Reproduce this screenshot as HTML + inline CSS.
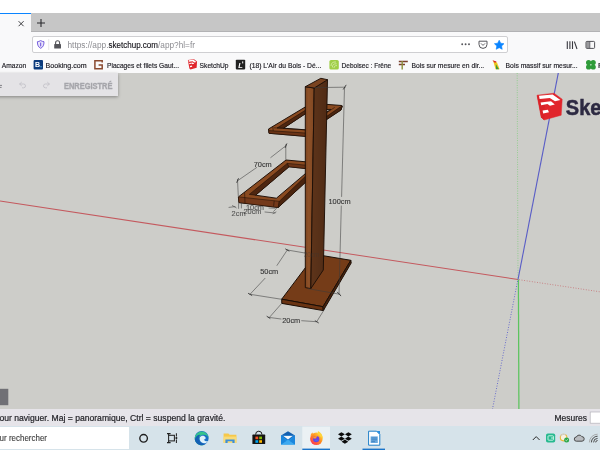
<!DOCTYPE html>
<html>
<head>
<meta charset="utf-8">
<title>SketchUp</title>
<style>
html,body{margin:0;padding:0;}
body{width:600px;height:450px;overflow:hidden;position:relative;background:#ffffff;font-family:"Liberation Sans",sans-serif;}
.abs{position:absolute;}
#tabbar{left:0;top:13px;width:600px;height:19.4px;background:#c6c6c6;border-bottom:0.8px solid #b2b2b4;box-sizing:border-box;}
#tab{left:0;top:13px;width:31.4px;height:19.5px;background:#f9f9fa;border-top:1.5px solid #0a84ff;box-sizing:border-box;}
#navbar{left:0;top:32px;width:600px;height:23px;background:#f9f9fa;}
#urlbar{left:32px;top:36px;width:476px;height:17px;background:#ffffff;border:1px solid #cfcfd2;border-radius:2px;box-sizing:border-box;}
#bmbar{left:0;top:55px;width:600px;height:18px;background:#f9f9fa;}
#canvas{left:0;top:73px;width:600px;height:336px;background:#cdcdc9;overflow:hidden;}
#panel{left:-4px;top:73px;width:122px;height:23px;background:#e4e3e6;box-shadow:0 1px 3px rgba(0,0,0,0.35);}
#status{left:0;top:409px;width:600px;height:17px;background:#e6e4e9;}
#taskbar{left:0;top:426px;width:600px;height:24px;background:#d6e3ea;}
#search{left:0;top:427.4px;width:129.2px;height:21.4px;background:#ffffff;}
</style>
</head>
<body>
<div class="abs" id="tabbar"></div>
<div class="abs" id="tab"></div>
<div class="abs" id="navbar"></div>
<div class="abs" id="urlbar"></div>
<div class="abs" id="bmbar"></div>
<div class="abs" id="canvas"></div>
<svg class="abs" id="scene" style="left:0;top:73px;will-change:transform" width="600" height="336" viewBox="0 73 600 336">
<!-- axes -->
<line x1="0" y1="201" x2="518" y2="279.5" stroke="#c4595e" stroke-width="1.15"/>
<line x1="519" y1="279.7" x2="600" y2="291.8" stroke="#c66a6e" stroke-width="1" stroke-dasharray="0.9 1.7" opacity="0.8"/>
<line x1="517.2" y1="73" x2="518" y2="278.6" stroke="#7fcf7c" stroke-width="0.95" stroke-dasharray="0.9 1.5" opacity="0.85"/>
<line x1="518.4" y1="279.5" x2="518.9" y2="409" stroke="#5cc45e" stroke-width="1.25"/>
<line x1="558.3" y1="73" x2="518" y2="279.5" stroke="#595dc6" stroke-width="1.15"/>
<line x1="517.6" y1="281" x2="492.5" y2="409" stroke="#5c60cc" stroke-width="1" stroke-dasharray="0.9 1.7" opacity="0.95"/>

<!-- base plate -->
<g stroke="#1a0d05" stroke-width="1" stroke-linejoin="round">
<polygon points="281.7,299.2 323,306.7 350.8,260.3 315.4,254.4" fill="#753c18"/>
<polygon points="281.7,299.2 323,306.7 323.3,310.6 281.8,303.4" fill="#6a3413"/>
<polygon points="323,306.7 350.8,260.3 351.2,263 323.3,310.6" fill="#4a230c"/>
</g>

<!-- upper frame -->
<g stroke="#1a0d05" stroke-width="0.95" stroke-linejoin="round">
<!-- left part silhouette -->
<path fill-rule="evenodd" fill="#8a4a20" d="M268.5,129 L311.4,103.3 L312,114 L308,136.6 L269,133.3 Z M283.5,128.2 L308,112 L308,130 Z"/>
<polygon points="277,128 308,108.6 308,112 283.5,128.2" fill="#4e2610" stroke-width="0.55"/>
<polygon points="268.6,130.6 308,133.2 308,136.6 269,133.3" fill="#6b3416" stroke-width="0.55"/>
<line x1="274" y1="127.8" x2="308" y2="130" stroke-width="0.5"/>
<line x1="272.8" y1="126.6" x2="273.2" y2="130.8" stroke-width="0.55"/>
<!-- right part -->
<path fill-rule="evenodd" fill="#8a4a20" d="M322,104 L341.8,105.5 L342.3,106 L341,110 L322,122.6 Z M322,109.6 L330.8,109.4 L322,115.2 Z"/>
<polygon points="342.3,106 341,110 322,122.6 322,119.6 339,107.8" fill="#4a240e" stroke-width="0.55"/>
<line x1="334.7" y1="107.4" x2="322" y2="115.8" stroke-width="0.55"/>
</g>

<!-- lower frame -->
<g stroke="#1a0d05" stroke-width="0.95" stroke-linejoin="round">
<path fill-rule="evenodd" fill="#8a4a20" d="M238.4,196.9 L286,160 L308,162 L308,180 L278.2,207.5 L238.9,202.6 Z M255.6,195.2 L289,166.8 L308,168.8 L308,171.4 L276.4,198.2 Z"/>
<polygon points="249.3,194.4 287.3,163.4 289,166.8 255.6,195.2" fill="#4e2610" stroke-width="0.55"/>
<polygon points="287.3,163.4 308,165.4 308,168.8 289,166.8" fill="#6b3416" stroke-width="0.55"/>
<polygon points="238.4,196.9 279.3,201.3 278.2,207.5 238.9,202.6" fill="#74391a" stroke-width="0.5"/>
<polygon points="279.3,201.3 308,173.8 308,180 278.2,207.5" fill="#4a240e" stroke-width="0.5"/>
<line x1="244.6" y1="192.2" x2="245" y2="203" stroke-width="0.55"/>
<line x1="274.2" y1="200.8" x2="273.6" y2="206.4" stroke-width="0.55"/>
</g>

<!-- post -->
<defs>
<linearGradient id="pf" x1="0" y1="0" x2="1" y2="0"><stop offset="0" stop-color="#7d4520"/><stop offset="0.35" stop-color="#8d5128"/><stop offset="1" stop-color="#824822"/></linearGradient>
<linearGradient id="ps" x1="0" y1="0" x2="1" y2="0"><stop offset="0" stop-color="#5e341a"/><stop offset="0.5" stop-color="#573018"/><stop offset="1" stop-color="#4f2a14"/></linearGradient>
</defs>
<g stroke="#1d0f06" stroke-width="0.95" stroke-linejoin="round">
<polygon points="305.3,86.7 314.2,88 310.8,288.6 305.3,287.6" fill="url(#pf)"/>
<polygon points="314.2,88 327.5,79.7 323.3,270 310.8,288.6" fill="url(#ps)"/>
<polygon points="305.3,86.7 314.2,88 327.5,79.7 320.8,78.3" fill="#7a4320"/>
</g>
<!-- dimensions -->
<g stroke="#3a3a3a" stroke-width="0.55" fill="none" stroke-linecap="round">
<!-- 70cm -->
<line x1="237.5" y1="180.8" x2="256.7" y2="167.5"/><line x1="270.8" y1="157.5" x2="285.8" y2="145.8"/>
<line x1="237.5" y1="179.6" x2="238.3" y2="196"/><line x1="285.8" y1="144.6" x2="285.8" y2="159.4"/>
<path d="M236.8,182.4 L238.4,178.6 M285.2,147.6 L286.8,143.8" stroke-width="0.9"/>
<!-- 100cm -->
<line x1="314.2" y1="87.6" x2="345.4" y2="87.2"/>
<line x1="344.5" y1="87.4" x2="341.6" y2="196.5"/><line x1="341.3" y1="206" x2="339" y2="294"/>
<line x1="308.3" y1="288.7" x2="340" y2="294.3"/>
<path d="M343.4,89.2 L346,85.2 M337.4,292.2 L340.8,295.8" stroke-width="0.9"/>
<!-- 50cm -->
<line x1="287.3" y1="250" x2="277" y2="265.4"/><line x1="265" y1="278.3" x2="250" y2="294.3"/>
<line x1="250" y1="294.3" x2="281.7" y2="299.3"/><line x1="287.3" y1="250" x2="306" y2="253.2"/>
<path d="M285.6,249 L289,251 M248.4,293.4 L251.8,295.4" stroke-width="0.9"/>
<!-- 20cm -->
<line x1="268.3" y1="317.3" x2="281" y2="319"/><line x1="301.7" y1="320.7" x2="316.7" y2="321.7"/>
<line x1="281.7" y1="303.4" x2="269.6" y2="317.2"/><line x1="324.6" y1="309" x2="316.7" y2="321.7"/>
<path d="M267,316.4 L270,318.4 M315.2,320.8 L318.4,322.8" stroke-width="0.9"/>
<!-- small dims under lower frame -->
<path d="M229,207.4 L235,206.6 M232.4,205.6 L236.2,207.8 M238.6,203 L238.6,208.4 M241.4,203 L241.4,208 M269,208 L275,208.2 M265,212 L275,213 M273.6,211.4 L277,207.8 M273,213.6 L276,212" />
</g>
<g font-family="Liberation Sans, sans-serif" font-size="7.4" fill="#363636" stroke="#363636" stroke-width="0.12" text-anchor="middle">
<text x="262.7" y="167.2">70cm</text>
<text x="339.6" y="204">100cm</text>
<text x="269.2" y="274.4">50cm</text>
<text x="291.2" y="323.4">20cm</text>
<text x="255" y="209.6" opacity="0.8">10cm</text>
<text x="252.5" y="213.8" opacity="0.8">20cm</text>
<text x="238.6" y="215.6" opacity="0.8">2cm</text>
<text x="311.5" y="256.6" font-size="6.4" opacity="0.4" stroke="none">20cm</text>
</g>
</svg>
<div class="abs" id="panel"></div>
<div class="abs" id="status"></div>
<div class="abs" id="taskbar"></div>
<div class="abs" id="search"></div>
<svg class="abs" id="ui" style="left:0;top:0;will-change:transform" width="600" height="450" viewBox="0 0 600 450" font-family="Liberation Sans, sans-serif">
<!-- tab close and new tab -->
<path d="M18.6,21.2 L23.6,26.2 M23.6,21.2 L18.6,26.2" stroke="#2a2a2e" stroke-width="0.9" fill="none"/>
<path d="M37,23 L45,23 M41,19 L41,27" stroke="#2a2a2e" stroke-width="1.1" fill="none"/>
<!-- shield -->
<path d="M40.7,40.6 C39.4,41.4 38.2,41.6 37.4,41.7 C37.3,45 38.4,47.2 40.7,48.3 C43,47.2 44.1,45 44,41.7 C43.2,41.6 42,41.4 40.7,40.6 Z" fill="#e9e4fb" stroke="#5b3fd6" stroke-width="0.8"/>
<path d="M40.7,42.6 L40.7,46.4" stroke="#5b3fd6" stroke-width="0.9"/>
<line x1="48.7" y1="39" x2="48.7" y2="50" stroke="#dcdcdf" stroke-width="0.7"/>
<!-- lock -->
<rect x="54.2" y="44" width="6.8" height="4.6" rx="0.6" fill="#55555a"/>
<path d="M55.6,44.2 L55.6,42.8 A2,2 0 0 1 59.6,42.8 L59.6,44.2" fill="none" stroke="#55555a" stroke-width="1.1"/>
<!-- url -->
<g font-size="9.2">
<text x="67.5" y="48" fill="#8c8c91" textLength="41" lengthAdjust="spacingAndGlyphs">https://app.</text>
<text x="108.5" y="48" fill="#15141a" stroke="#15141a" stroke-width="0.15" textLength="49.5" lengthAdjust="spacingAndGlyphs">sketchup.com</text>
<text x="158" y="48" fill="#8c8c91" textLength="37" lengthAdjust="spacingAndGlyphs">/app?hl=fr</text>
</g>
<!-- url right icons -->
<g fill="#55555a"><circle cx="462.2" cy="44.3" r="0.95"/><circle cx="465.6" cy="44.3" r="0.95"/><circle cx="469" cy="44.3" r="0.95"/></g>
<path d="M479,41.2 L487,41.2 L487,44.4 A4,4 0 0 1 479,44.4 Z" fill="none" stroke="#55555a" stroke-width="1"/>
<path d="M481,43.4 L483,45.4 L485,43.4" fill="none" stroke="#55555a" stroke-width="0.9"/>
<path d="M499.2,40.2 L500.7,43.2 L504,43.7 L501.6,46 L502.2,49.3 L499.2,47.7 L496.2,49.3 L496.8,46 L494.4,43.7 L497.7,43.2 Z" fill="#0a84ff" stroke="#0a84ff" stroke-width="0.6" stroke-linejoin="round"/>
<!-- library, sidebar -->
<path d="M567.3,41.2 L567.3,49 M569.9,41.2 L569.9,49 M572.5,41.2 L572.5,49 M574.4,41.6 L577,49" stroke="#3a3a40" stroke-width="1.1" fill="none"/>
<rect x="586" y="41.4" width="8.6" height="7" rx="0.9" fill="none" stroke="#4a4a4f" stroke-width="0.95"/>
<rect x="586.4" y="41.8" width="3.2" height="6.2" fill="#4a4a4f" opacity="0.55"/>
<line x1="589.8" y1="41.4" x2="589.8" y2="48.4" stroke="#4a4a4f" stroke-width="0.8"/>
<!-- bookmarks text -->
<g font-size="7.9" fill="#1c1b22" stroke="#1c1b22" stroke-width="0.18">
<text x="1.8" y="67.8" textLength="24.4" lengthAdjust="spacingAndGlyphs">Amazon</text>
<text x="45.6" y="67.8" textLength="41" lengthAdjust="spacingAndGlyphs">Booking.com</text>
<text x="107" y="67.8" textLength="72" lengthAdjust="spacingAndGlyphs">Placages et filets Gaut...</text>
<text x="199.6" y="67.8" textLength="29" lengthAdjust="spacingAndGlyphs">SketchUp</text>
<text x="249.4" y="67.8" textLength="72" lengthAdjust="spacingAndGlyphs">(18) L'Air du Bois - Dé...</text>
<text x="341.6" y="67.8" textLength="49.6" lengthAdjust="spacingAndGlyphs">Deboisec : Frêne</text>
<text x="411.6" y="67.8" textLength="72.6" lengthAdjust="spacingAndGlyphs">Bois sur mesure en dir...</text>
<text x="505.6" y="67.8" textLength="72" lengthAdjust="spacingAndGlyphs">Bois massif sur mesur...</text>
<text x="598" y="67.8">F</text>
</g>
<!-- bookmark icons -->
<rect x="33.6" y="60" width="9.4" height="9.4" rx="1" fill="#0c3b7c"/>
<text x="35" y="67.4" font-size="7" font-weight="bold" fill="#ffffff">B</text><circle cx="41" cy="66.8" r="0.7" fill="#5bb9f0"/>
<path d="M102.2,62.6 L102.2,60.8 L94.9,60.8 L94.9,68.8 L102.2,68.8 L102.2,65 L98.6,65" fill="none" stroke="#8a4a30" stroke-width="1.5"/>
<g transform="translate(-7.6,23.4) scale(0.364,0.385)"><polygon points="537,95.2 554,93.2 562.2,99.2 561.2,115.2 544,120 541.2,117.2" fill="#e1262c"/><polygon points="539,95.8 552.6,94.6 560.4,100 555,101.6 549.8,98.4 539.6,99.4" fill="#ffffff"/><polygon points="540.6,102.6 551,101.3 554.8,104.4 550,106.2 547.4,104.4 541.2,105.8" fill="#ffffff"/><polygon points="542.6,110.4 547.8,109.6 549,112.6 543.2,114" fill="#ffffff"/></g>
<rect x="235.8" y="59.8" width="9.4" height="9.6" rx="0.8" fill="#222222"/>
<text x="238.2" y="67.8" font-size="7.4" font-style="italic" font-weight="bold" fill="#ffffff">L</text><rect x="242.2" y="61.4" width="1" height="2" fill="#ffffff"/>
<rect x="329.4" y="60" width="9.4" height="9.6" rx="1.6" fill="#9fce46"/>
<path d="M331,66 C331,63 333,61.6 336,62 M332.4,67.4 C332.2,65 334,63.4 336.6,63.8 M334,68 C333.8,66.6 335,65.4 337,65.6" fill="none" stroke="#dff0b8" stroke-width="0.7"/>
<path d="M398.8,61.4 L407.8,61.4 M398.8,64.6 L405,64.6" stroke="#7a3f2c" stroke-width="1.5"/><path d="M402.2,61 L402.2,69.6" stroke="#8b8f3a" stroke-width="1.4"/>
<path d="M493,60.6 L497,62.4 L499.6,69.2 L495.6,69.2 Z" fill="#f2c81e"/><path d="M495.8,64 L499,69.2 L496,69.2 Z" fill="#3c9a3a"/><path d="M492.4,60.2 L496.6,61.4 L495,63 Z" fill="#d8232a"/>
<g fill="#2f9b39"><circle cx="588.6" cy="62.6" r="2.6"/><circle cx="593.2" cy="62.6" r="2.6"/><circle cx="588.6" cy="67" r="2.6"/><circle cx="593.2" cy="67" r="2.6"/></g>
<!-- panel content -->
<g fill="none" stroke="#c3c2c8" stroke-width="0.9" stroke-linecap="round" stroke-linejoin="round">
<path d="M21.4,82.4 L19.6,84 L21.4,85.6 M19.8,84 L23.6,84 A1.9,1.9 0 0 1 23.6,87.8 L22.4,87.8"/>
<path d="M47.6,82.4 L49.4,84 L47.6,85.6 M49.2,84 L45.4,84 A1.9,1.9 0 0 0 45.4,87.8 L46.6,87.8"/>
<path d="M0,85.4 L1.6,85.4 M0,87.4 L1.2,87.4" stroke="#77767c"/>
</g>
<text x="64" y="88.6" font-size="8.2" font-weight="bold" fill="#a6a6ab" stroke="#a6a6ab" stroke-width="0.35" textLength="48.4" lengthAdjust="spacingAndGlyphs">ENREGISTRÉ</text>
<!-- dark square bottom-left -->
<rect x="0" y="388.8" width="8.3" height="16.4" fill="#707075"/>
<!-- sketchup logo -->
<g>
<polygon points="537,95.2 554,93.2 562.2,99.2 561.2,115.2 544,120 541.2,117.2" fill="#e1262c" stroke="#e1262c" stroke-width="0.5" stroke-linejoin="round"/>
<polygon points="537,95.2 545,102.4 544,120 541.2,117.2" fill="#d92228"/>
<polygon points="539,95.8 552.6,94.6 560.4,100 555,101.2 549.8,98 539.6,98.9" fill="#ffffff"/>
<polygon points="540.6,102.6 551,101.3 554.8,104.4 550,105.7 547.4,104 541.2,105.2" fill="#ffffff"/>
<polygon points="542.6,110.6 547.8,109.8 549,112.2 543.2,113.5" fill="#ffffff"/>
<text x="565.8" y="114.5" font-size="22" font-weight="bold" fill="#2d2a42" stroke="#2d2a42" stroke-width="0.5" textLength="35.6" lengthAdjust="spacingAndGlyphs">Ske</text>
</g>
<!-- status bar -->
<text x="-0.6" y="421.3" font-size="8.6" fill="#1f1f24" stroke="#1f1f24" stroke-width="0.2" textLength="226" lengthAdjust="spacingAndGlyphs">our naviguer. Maj = panoramique, Ctrl = suspend la gravité.</text>
<text x="554.5" y="421.3" font-size="8.6" fill="#1f1f24" stroke="#1f1f24" stroke-width="0.2" textLength="32.5" lengthAdjust="spacingAndGlyphs">Mesures</text>
<rect x="590.2" y="412" width="12" height="11.2" fill="#ffffff" stroke="#b4b3ba" stroke-width="0.7"/>
<!-- taskbar -->
<text x="-0.4" y="441.4" font-size="8.2" fill="#3c3c3c" stroke="#3c3c3c" stroke-width="0.12" textLength="47.4" lengthAdjust="spacingAndGlyphs">ur rechercher</text>
<circle cx="143.6" cy="438.3" r="3.8" fill="none" stroke="#1e1e1e" stroke-width="1.35"/>
<!-- task view -->
<g stroke="#232323" stroke-width="1.05" fill="none"><rect x="168.6" y="435.3" width="5.8" height="5.6"/><path d="M167,433.6 L170.6,433.6 M167,442.6 L170.6,442.6 M168.6,433.6 L168.6,435.3 M168.6,440.9 L168.6,442.6 M176.4,433.2 L176.4,436.6 M176.4,439.6 L176.4,443"/><circle cx="176.4" cy="438.1" r="0.5" fill="#232323"/></g>
<!-- edge -->
<circle cx="201.7" cy="438" r="7" fill="#1a6fc4"/>
<path d="M194.8,439 A7,7 0 0 1 208.6,437 C207,433.8 201.6,433.4 199.4,437 C198,440.4 200.4,444 205,444.6 A7,7 0 0 1 194.8,439 Z" fill="#36c58c" transform="rotate(8 201.7 438)"/>
<path d="M194.8,439.6 C195.4,436 198,434.6 200.4,434.8 C198.8,436.4 198.4,438.6 199.2,440.6 C200.2,443 202.8,444.4 205.6,444 A7,7 0 0 1 194.8,439.6 Z" fill="#1560b4"/>
<path d="M199.8,437.4 C201,435.2 204.6,435.2 205.6,437.6 C206,439 204.8,439.8 203.8,439.5 C204.6,441.4 207,441.8 208.4,440.8 C207.2,443.4 203.6,443.8 201.4,442.2 C199.8,440.8 199.3,439 199.8,437.4 Z" fill="#dff1fb"/>
<!-- explorer -->
<path d="M223.6,433.6 L228.4,433.6 L229.6,434.8 L236.4,434.8 L236.4,443 L223.6,443 Z" fill="#f6c84a"/>
<rect x="223.6" y="436.6" width="12.8" height="6.4" fill="#f9db78"/>
<path d="M225.4,443 L225.4,439.4 L234.6,439.4 L234.6,443 L232.4,443 L232.4,441.2 L227.6,441.2 L227.6,443 Z" fill="#3d8fd8"/>
<!-- store -->
<path d="M255.6,434.6 A3.2,3.4 0 0 1 262,434.6" fill="none" stroke="#1a1a1a" stroke-width="1"/>
<rect x="252.4" y="434.6" width="12.8" height="9.4" rx="0.6" fill="#141414"/>
<rect x="255.4" y="436.6" width="2.8" height="2.6" fill="#f25022"/><rect x="259.2" y="436.6" width="2.8" height="2.6" fill="#7fba00"/><rect x="255.4" y="440.2" width="2.8" height="2.6" fill="#00a4ef"/><rect x="259.2" y="440.2" width="2.8" height="2.6" fill="#ffb900"/>
<!-- mail -->
<rect x="281" y="435.4" width="14" height="9.2" fill="#2196e8"/>
<polygon points="281,435.5 288,431.3 295,435.5" fill="#1460b0"/>
<polygon points="281,435.5 295,435.5 288,440.8" fill="#1873c8"/>
<polygon points="283.4,435.9 292.6,435.9 288,439.4" fill="#f4f8fb"/>
<polygon points="281,444.6 288,439.8 295,444.6" fill="#3ea9f0"/>
<polygon points="281,435.5 281,444.6 286.2,441" fill="#1b86dc"/><polygon points="295,435.5 295,444.6 289.8,441" fill="#1b86dc"/>
<!-- firefox -->
<defs><linearGradient id="ffg" x1="0.85" y1="0.1" x2="0.15" y2="0.95"><stop offset="0" stop-color="#ffd83d"/><stop offset="0.45" stop-color="#ff8a1f"/><stop offset="1" stop-color="#ff2f54"/></linearGradient></defs>
<rect x="302.3" y="426.6" width="27.7" height="23.4" fill="#ebf1f4"/>
<rect x="302.3" y="448.6" width="27.7" height="1.4" fill="#1b74c9"/>
<circle cx="316.4" cy="438.8" r="6.3" fill="url(#ffg)"/>
<path d="M317.2,433.6 C317.8,432.8 318.1,431.8 317.9,430.9 C320.8,432.3 322.9,435.2 322.9,438.6 L320.4,436.4 Z" fill="#ffd33a"/>
<path d="M310.6,436 C310.8,434.4 311.6,433.2 312.6,432.6 C312.6,433.6 313,434.4 313.6,434.8 Z" fill="#ff9a2a"/>
<circle cx="316.2" cy="439.1" r="3.2" fill="#6f3fe0"/>
<path d="M313,438 C313.6,436.4 315.6,435.6 317.6,436.2 C316.6,436.6 316.2,437.4 316.4,438.2 C315.2,438.8 313.8,438.6 313,438 Z" fill="#ff9a2a"/>
<path d="M314.4,440.2 C315.4,439.6 317,439.6 318.4,440 C317.8,441.4 315.6,441.8 314.4,440.2 Z" fill="#3f7af0" opacity="0.8"/>
<!-- dropbox -->
<g fill="#0b0b0b"><polygon points="341.4,432.2 344.8,434.3 341.4,436.4 338,434.3"/><polygon points="348.4,432.2 351.8,434.3 348.4,436.4 345,434.3"/><polygon points="341.4,436.6 344.8,438.7 341.4,440.8 338,438.7"/><polygon points="348.4,436.6 351.8,438.7 348.4,440.8 345,438.7"/><polygon points="344.9,439.6 348.2,441.7 344.9,443.8 341.6,441.7"/></g>
<!-- libreoffice writer -->
<rect x="362.5" y="448.6" width="22.5" height="1.4" fill="#1b74c9"/>
<path d="M368.6,431.2 L376.6,431.2 L379.8,434.4 L379.8,445.2 L368.6,445.2 Z" fill="#ffffff" stroke="#1f7fc8" stroke-width="1"/>
<path d="M376.4,431 L380,434.6 L380,431 Z" fill="#2a8fe0"/>
<rect x="370.6" y="436.4" width="7.2" height="6.6" fill="#6aa9de"/>
<path d="M371.4,438 L377,438 M371.4,439.8 L377,439.8 M371.4,441.6 L375,441.6" stroke="#2a6fb0" stroke-width="0.6"/>
<!-- tray -->
<path d="M532.8,440 L536.2,436.6 L539.6,440" fill="none" stroke="#2a2a2a" stroke-width="1"/>
<rect x="546" y="433.4" width="9.2" height="9.2" rx="1.8" fill="#27b98f"/><rect x="548" y="435.8" width="5.4" height="4.4" rx="0.7" fill="none" stroke="#e8fff6" stroke-width="0.8"/><line x1="551" y1="438" x2="553.4" y2="438" stroke="#e8fff6" stroke-width="0.8"/>
<circle cx="563.6" cy="437.6" r="3.3" fill="#f6f0e0" stroke="#e9b93a" stroke-width="1.1"/><path d="M560.6,436.2 A3.3,3.3 0 0 1 565.6,434.9" stroke="#d0d0d0" stroke-width="1.1" fill="none"/><circle cx="566.6" cy="440" r="2.5" fill="#2aa84a"/><path d="M565.4,440 L566.3,440.9 L567.8,439.2" stroke="#fff" stroke-width="0.6" fill="none"/>
<path d="M576.4,441.2 A2.1,2.1 0 0 1 576.4,437 A3,3 0 0 1 581.8,436.6 A2.3,2.3 0 0 1 582,441.2 Z" fill="#b9bcc0" stroke="#3c3c3c" stroke-width="0.9"/>
<path d="M593.6,442.4 A4,4 0 0 1 597.6,438.4 M591.4,442.4 A6.2,6.2 0 0 1 597.6,436.2 M595.7,442.4 A1.9,1.9 0 0 1 597.6,440.5" fill="none" stroke="#3a3a3a" stroke-width="0.9"/>
<path d="M597.6,434.2 A8.2,8.2 0 0 0 589.4,442.4" fill="none" stroke="#9a9a9a" stroke-width="0.8"/>
</svg>
</body>
</html>
